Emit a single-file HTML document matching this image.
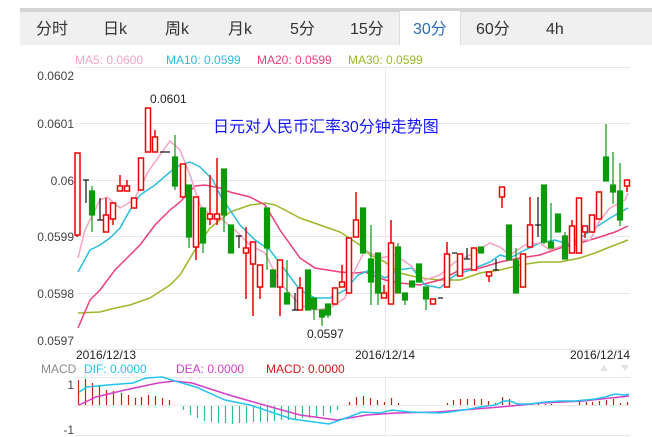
<!DOCTYPE html>
<html><head><meta charset="utf-8"><style>
html,body{margin:0;padding:0;background:#fff;width:652px;height:437px;overflow:hidden}
svg{display:block}
text{font-family:"Liberation Sans","Noto Sans CJK SC",sans-serif}
</style></head><body>
<svg width="652" height="437" viewBox="0 0 652 437" xmlns="http://www.w3.org/2000/svg">
<rect x="20" y="8" width="632" height="4" fill="#d4d4d4"/>
<rect x="20" y="12" width="632" height="33" fill="#f0f0f0"/>
<rect x="399" y="11" width="62" height="34" fill="#fff"/>
<line x1="399.5" y1="11" x2="399.5" y2="45" stroke="#ddd"/>
<line x1="460.5" y1="11" x2="460.5" y2="45" stroke="#ddd"/>
<g font-size="16" fill="#333">
<text x="36" y="34">分时</text><text x="103" y="34">日k</text><text x="165" y="34">周k</text>
<text x="228" y="34">月k</text><text x="290" y="34">5分</text><text x="350" y="34">15分</text>
<text x="413" y="34" fill="#2a6cc0">30分</text><text x="476" y="34">60分</text><text x="546" y="34">4h</text>
</g>
<g font-size="12">
<text x="75" y="64" fill="#f7a3c3">MA5: 0.0600</text>
<text x="166" y="64" fill="#2bbde0">MA10: 0.0599</text>
<text x="257" y="64" fill="#ee3f78">MA20: 0.0599</text>
<text x="348" y="64" fill="#98b826">MA30: 0.0599</text>
</g>
<g stroke="#e8e8e8" stroke-width="1">
<line x1="76" y1="67.5" x2="630" y2="67.5"/><line x1="76" y1="123.5" x2="630" y2="123.5"/>
<line x1="76" y1="180.5" x2="630" y2="180.5"/><line x1="76" y1="236.5" x2="630" y2="236.5"/>
<line x1="76" y1="293.5" x2="630" y2="293.5"/><line x1="76" y1="349.5" x2="630" y2="349.5"/>
<line x1="385.5" y1="67" x2="385.5" y2="349"/>
<line x1="76" y1="377.5" x2="630" y2="377.5"/><line x1="76" y1="405.5" x2="630" y2="405.5"/>
<line x1="76" y1="435.5" x2="630" y2="435.5"/><line x1="385.5" y1="377" x2="385.5" y2="435"/>
</g>
<g font-size="12" fill="#444" text-anchor="end">
<text x="74" y="80">0.0602</text><text x="74" y="128">0.0601</text><text x="74" y="185">0.06</text>
<text x="74" y="241">0.0599</text><text x="74" y="298">0.0598</text><text x="74" y="345">0.0597</text>
</g>
<text x="150" y="103" font-size="12" fill="#222">0.0601</text>
<text x="307" y="338" font-size="12" fill="#222">0.0597</text>
<text x="213" y="132" font-size="16" fill="#1414ff">日元对人民币汇率30分钟走势图</text>
<g fill="none" stroke-width="1.5">
<polyline stroke="#98b826" points="78,313 100,312 115,308 130,305 150,298 170,285 180,275 195,250 210,228 230,212 250,205 265,203 275,205 285,210 300,218 320,225 340,232 360,245 370,255 385,262 400,273 420,278 440,280 460,280 480,273 500,270 520,265 540,262 560,262 580,258 595,253 610,247 628,240"/>
<polyline stroke="#ee3f78" points="78,328 90,300 100,290 115,270 130,255 140,245 155,225 170,210 180,202 195,186 205,185 220,188 230,192 250,197 265,205 280,230 300,258 315,268 340,272 355,273 365,272 385,280 400,283 420,285 440,280 460,270 480,268 500,262 520,258 540,255 560,248 580,243 600,237 615,232 628,226"/>
<polyline stroke="#2bbde0" points="78,272 90,250 100,245 110,238 120,228 130,210 140,195 155,185 170,172 180,165 190,162 200,167 213,180 220,195 230,210 240,225 255,240 270,250 285,270 300,290 315,298 330,298 345,290 358,275 370,270 385,278 398,270 412,268 425,285 440,288 455,275 470,270 490,262 500,255 510,258 525,250 540,243 555,240 570,245 580,238 595,228 610,218 628,208"/>
<polyline stroke="#f7a3c3" points="78,258 85,230 100,200 107,197 120,208 134,200 148,172 160,155 170,141 180,150 190,175 200,205 213,218 220,218 235,230 250,245 265,253 280,283 300,305 315,310 330,308 345,298 355,270 365,250 380,258 395,255 410,265 425,280 440,275 455,262 470,255 490,243 500,247 510,255 525,245 540,243 550,250 565,245 575,240 590,240 600,220 610,208 625,200 628,193"/>
</g>
<g stroke="#e00" fill="#fff" stroke-width="1.5">
<line x1="77" y1="235" x2="77" y2="237"/><rect x="75" y="153" width="5" height="82"/>
<line x1="106" y1="198" x2="106" y2="215"/><rect x="103.5" y="215" width="5" height="17"/>
<rect x="110.5" y="203" width="5" height="16"/><line x1="113" y1="219" x2="113" y2="225"/>
<line x1="120" y1="175" x2="120" y2="186"/><rect x="117.5" y="186" width="5" height="5"/>
<line x1="127" y1="180" x2="127" y2="186"/><rect x="124.5" y="186" width="5" height="5"/>
<rect x="131.5" y="198" width="5" height="10"/>
<rect x="138.5" y="158" width="5" height="32"/>
<rect x="145.5" y="108" width="5" height="44"/>
<line x1="155" y1="130" x2="155" y2="137"/><rect x="152.5" y="137" width="5" height="15"/>
<rect x="180.5" y="164" width="5" height="33"/>
<line x1="196" y1="247" x2="196" y2="260"/><rect x="193.5" y="197" width="5" height="50"/>
<line x1="210" y1="175" x2="210" y2="225"/><rect x="207.5" y="214" width="5" height="5"/>
<line x1="217" y1="158" x2="217" y2="225"/><rect x="214.5" y="214" width="5" height="5"/>
<line x1="246" y1="227" x2="246" y2="299"/><rect x="243.5" y="248" width="5" height="5"/>
<line x1="253" y1="264" x2="253" y2="316"/><rect x="250.5" y="242" width="5" height="22"/>
<line x1="260" y1="287" x2="260" y2="299"/><rect x="257.5" y="265" width="5" height="22"/>
<line x1="280" y1="287" x2="280" y2="316"/><rect x="277.5" y="260" width="5" height="27"/>
<line x1="300" y1="277" x2="300" y2="288"/><rect x="297.5" y="288" width="5" height="22"/>
<rect x="332.5" y="288" width="5" height="16"/>
<line x1="342" y1="265" x2="342" y2="282"/><rect x="339.5" y="282" width="5" height="5"/>
<rect x="346.5" y="238" width="5" height="55"/>
<line x1="356" y1="192" x2="356" y2="220"/><rect x="353.5" y="220" width="5" height="17"/>
<line x1="384" y1="285" x2="384" y2="293"/><rect x="381.5" y="293" width="5" height="5"/>
<line x1="391" y1="220" x2="391" y2="243"/><rect x="388.5" y="243" width="5" height="61"/>
<rect x="430.5" y="299" width="5" height="5"/>
<line x1="447" y1="242" x2="447" y2="254"/><rect x="444.5" y="254" width="5" height="33"/>
<rect x="457.5" y="254" width="5" height="22"/>
<rect x="471.5" y="248" width="5" height="22"/>
<line x1="489" y1="276" x2="489" y2="282"/><rect x="486.5" y="272" width="5" height="4"/>
<line x1="502" y1="197" x2="502" y2="208"/><rect x="499.5" y="187" width="5" height="10"/>
<rect x="520.5" y="254" width="5" height="33"/>
<line x1="530" y1="197" x2="530" y2="225"/><rect x="527.5" y="225" width="5" height="22"/>
<line x1="572" y1="220" x2="572" y2="226"/><rect x="569.5" y="226" width="5" height="27"/>
<rect x="576.5" y="198" width="5" height="55"/>
<line x1="585" y1="232" x2="585" y2="238"/><rect x="582.5" y="226" width="5" height="6"/>
<rect x="589.5" y="215" width="5" height="17"/>
<rect x="596.5" y="192" width="5" height="27"/>
<line x1="627" y1="186" x2="627" y2="192"/><rect x="624.5" y="180" width="5" height="6"/>
</g>
<g stroke="#0a9a0a" fill="#0a9a0a" stroke-width="1.2">
<line x1="92" y1="186" x2="92" y2="232"/><rect x="89.5" y="191" width="5" height="24"/>
<line x1="175" y1="135" x2="175" y2="190"/><rect x="172.5" y="157" width="5" height="29"/>
<line x1="189" y1="185" x2="189" y2="248"/><rect x="186.5" y="185" width="5" height="52"/>
<line x1="203" y1="208" x2="203" y2="253"/><rect x="200.5" y="208" width="5" height="35"/>
<line x1="224" y1="169" x2="224" y2="232"/><rect x="221.5" y="169" width="5" height="46"/>
<rect x="228.5" y="225" width="5" height="28"/>
<line x1="267" y1="208" x2="267" y2="270"/><rect x="264.5" y="208" width="5" height="40"/>
<rect x="270.5" y="270" width="5" height="17"/>
<line x1="287" y1="260" x2="287" y2="304"/><rect x="284.5" y="293" width="5" height="11"/>
<rect x="305.5" y="270" width="5" height="40"/>
<line x1="314" y1="298" x2="314" y2="320"/><rect x="311.5" y="298" width="5" height="11"/>
<line x1="322" y1="310" x2="322" y2="326"/><rect x="319.5" y="310" width="5" height="7"/>
<line x1="328" y1="304" x2="328" y2="318"/><rect x="325.5" y="304" width="5" height="11"/>
<rect x="360.5" y="208" width="5" height="45"/>
<line x1="371" y1="225" x2="371" y2="305"/><rect x="368.5" y="259" width="5" height="23"/>
<line x1="378" y1="253" x2="378" y2="305"/><rect x="375.5" y="253" width="5" height="40"/>
<line x1="398" y1="243" x2="398" y2="293"/><rect x="395.5" y="247" width="5" height="46"/>
<line x1="405" y1="293" x2="405" y2="305"/><rect x="402.5" y="293" width="5" height="7"/>
<rect x="409.5" y="281" width="5" height="6"/>
<rect x="416.5" y="264" width="5" height="18"/>
<line x1="426" y1="287" x2="426" y2="310"/><rect x="423.5" y="287" width="5" height="12"/>
<rect x="478.5" y="247" width="5" height="6"/>
<rect x="506.5" y="225" width="5" height="35"/>
<line x1="516" y1="248" x2="516" y2="293"/><rect x="513.5" y="260" width="5" height="33"/>
<line x1="544" y1="185" x2="544" y2="244"/><rect x="541.5" y="185" width="5" height="57"/>
<line x1="551" y1="203" x2="551" y2="248"/><rect x="548.5" y="242" width="5" height="6"/>
<rect x="555.5" y="214" width="5" height="18"/>
<line x1="565" y1="232" x2="565" y2="259"/><rect x="562.5" y="236" width="5" height="23"/>
<line x1="606" y1="124" x2="606" y2="181"/><rect x="603.5" y="157" width="5" height="24"/>
<line x1="613" y1="152" x2="613" y2="204"/><rect x="610.5" y="185" width="5" height="7"/>
<line x1="620" y1="163" x2="620" y2="226"/><rect x="617.5" y="191" width="5" height="29"/>
</g>
<g stroke="#111" stroke-width="1.2">
<line x1="86" y1="180" x2="86" y2="203"/><line x1="83" y1="180" x2="89" y2="180"/>
<line x1="100" y1="198" x2="100" y2="220"/><line x1="97" y1="220" x2="103" y2="220"/>
<line x1="160" y1="152" x2="170" y2="152"/>
<line x1="239" y1="236" x2="239" y2="248"/><line x1="236" y1="236" x2="242" y2="236"/>
<line x1="295" y1="293" x2="295" y2="310"/><line x1="292" y1="310" x2="298" y2="310"/>
<line x1="438" y1="298" x2="443" y2="298"/><line x1="452" y1="253" x2="457" y2="253"/>
<line x1="467" y1="248" x2="467" y2="259"/><line x1="464" y1="259" x2="470" y2="259"/>
<line x1="496" y1="259" x2="496" y2="270"/><line x1="493" y1="270" x2="499" y2="270"/>
<line x1="538" y1="197" x2="538" y2="237"/><line x1="535" y1="225" x2="541" y2="225"/>
</g>
<g font-size="12" fill="#222">
<text x="76" y="359">2016/12/13</text><text x="355" y="359">2016/12/14</text><text x="570" y="359">2016/12/14</text>
</g>
<g font-size="12">
<text x="41" y="373" fill="#888">MACD</text>
<text x="84" y="373" fill="#22c4ee">DIF: 0.0000</text>
<text x="176" y="373" fill="#d63dc8">DEA: 0.0000</text>
<text x="266" y="373" fill="#d01818">MACD: 0.0000</text>
</g>
<path d="M600 371 l4 -6 l4 6z" fill="#e2e2e2"/><path d="M621 365 l4 6 l4 -6z" fill="#e2e2e2"/>
<g font-size="12" fill="#444" text-anchor="end"><text x="74" y="389">1</text><text x="74" y="434">-1</text></g>
<g stroke="#c0250a" stroke-width="1.2" transform="translate(0.5,0)">
<path d="M78 405V380M85 405V379M92 405V383M99 405V386M106 405V390M113 405V391M121 405V393M128 405V395M135 405V398M141 405V397M148 405V395M155 405V396M162 405V398M169 405V400M349 405V402M356 405V397M363 405V396M370 405V398M377 405V400M384 405V402M391 405V398M398 405V403M447 405V403M453 405V400M460 405V399M467 405V399M474 405V399M481 405V399M488 405V401M495 405V403M502 405V397M509 405V399M531 405V403M538 405V403M545 405V404M551 405V404M579 405V401M586 405V402M592 405V402M599 405V401M606 405V400M613 405V399M620 405V403M627 405V402"/>
</g>
<g stroke="#2cc08c" stroke-width="1.2" transform="translate(0.5,0)">
<path d="M183 406V410M190 406V415M197 406V418M204 406V421M211 406V422M218 406V423M225 406V423M232 406V424M239 406V423M246 406V423M253 406V422M260 406V422M267 406V422M274 406V421M281 406V420M288 406V420M295 406V419M302 406V418M309 406V418M316 406V418M323 406V416M330 406V413M337 406V410"/>
</g>
<g fill="none" stroke-width="1.5">
<polyline stroke="#d63dc8" points="79,405 96,397 125,390 158,383 175,381 192,383 229,395 271,407 300,415 337,420 367,415 396,413 437,412 500,407 542,403 583,401 629,396"/>
<polyline stroke="#22c4ee" points="79,392 87,387 108,385 133,383 146,378 162,377 175,381 196,387 225,400 250,405 271,412 292,419 329,424 346,418 362,412 380,413 392,410 410,412 440,413 450,412 470,409 480,407 495,405 500,403 503,401 510,401 518,404 530,404 545,402 560,401 575,401 585,400 595,399 605,397 615,394 625,395 629,394"/>
</g>
</svg>
</body></html>
